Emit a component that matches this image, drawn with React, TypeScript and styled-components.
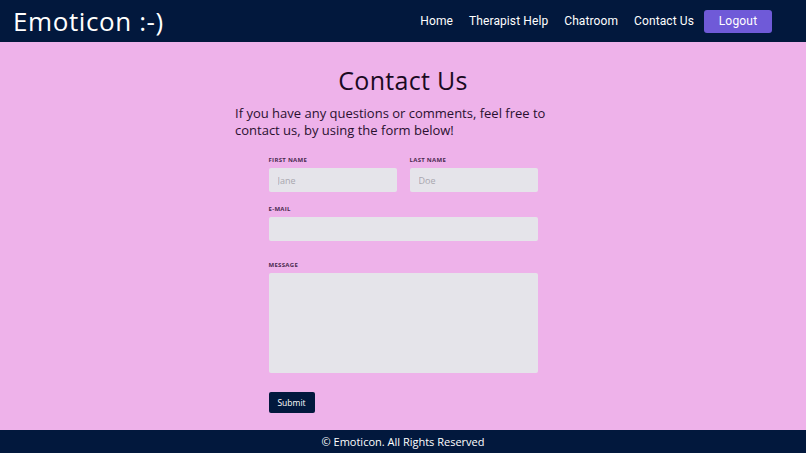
import React from "react";
import styled, { createGlobalStyle } from "styled-components";

const GlobalStyle = createGlobalStyle`
  body {
    margin: 0;
    font-family: "Open Sans", "Noto Sans", sans-serif;
    background: #eeb2ea;
  }
`;

const App: React.FC = () => {
  return (
    <>
      <GlobalStyle />
      <Page>
        <Header>
          <Logo>Emoticon :-)</Logo>
          <Nav>
            <NavLink>Home</NavLink>
            <NavLink>Therapist Help</NavLink>
            <NavLink>Chatroom</NavLink>
            <NavLink>Contact Us</NavLink>
            <LogoutButton>Logout</LogoutButton>
          </Nav>
        </Header>
        <Main>
          <Title>Contact Us</Title>
          <Intro>
            If you have any questions or comments, feel free to contact us, by
            using the form below!
          </Intro>
          <Form onSubmit={(e) => e.preventDefault()}>
            <Row>
              <Field>
                <Label>First Name</Label>
                <Input placeholder="Jane" />
              </Field>
              <Field>
                <Label>Last Name</Label>
                <Input placeholder="Doe" />
              </Field>
            </Row>
            <Field $top={13}>
              <Label>E-mail</Label>
              <Input />
            </Field>
            <Field $top={20}>
              <Label>Message</Label>
              <TextArea />
            </Field>
            <SubmitButton type="submit">Submit</SubmitButton>
          </Form>
        </Main>
        <Footer>© Emoticon. All Rights Reserved</Footer>
      </Page>
    </>
  );
};

export default App;

const Page = styled.div`
  min-height: 453px;
  display: flex;
  flex-direction: column;
`;

const Header = styled.header`
  height: 42px;
  flex-shrink: 0;
  background: #02183d;
  display: flex;
  align-items: center;
  justify-content: space-between;
  padding: 0 34px 0 13px;
  box-sizing: border-box;
`;

const Logo = styled.div`
  color: #fff;
  font-size: 26px;
  letter-spacing: 0.6px;
  line-height: 1;
`;

const Nav = styled.nav`
  display: flex;
  align-items: center;
  gap: 16px;
`;

const NavLink = styled.a`
  color: #fff;
  font-family: Roboto, "Noto Sans", sans-serif;
  font-size: 12px;
  letter-spacing: 0.1px;
  cursor: pointer;
`;

const LogoutButton = styled.button`
  margin-left: -6px;
  width: 68px;
  height: 23px;
  border: none;
  border-radius: 3px;
  background: #6f5ad8;
  color: #fff;
  font-family: Roboto, "Noto Sans", sans-serif;
  font-size: 12px;
  letter-spacing: 0.2px;
`;

const Main = styled.main`
  flex: 1;
  display: flex;
  flex-direction: column;
  align-items: center;
  padding: 19px 0 17px;
`;

const Title = styled.h1`
  margin: 0;
  font-size: 25px;
  font-weight: 400;
  color: #1a0a1f;
  line-height: 38px;
  letter-spacing: 0.3px;
`;

const Intro = styled.p`
  margin: 6px 18px 0 0;
  width: 318px;
  font-size: 13px;
  line-height: 17px;
  color: #2a1030;
`;

const Form = styled.form`
  width: 269px;
  margin-top: 17px;
  display: flex;
  flex-direction: column;
`;

const Row = styled.div`
  display: grid;
  grid-template-columns: minmax(0, 1fr) minmax(0, 1fr);
  gap: 13px;
`;

const Field = styled.div<{ $top?: number }>`
  display: flex;
  flex-direction: column;
  min-width: 0;
  margin-top: ${(p) => p.$top ?? 0}px;
`;

const Label = styled.label`
  font-size: 6px;
  line-height: 8px;
  font-weight: 700;
  text-transform: uppercase;
  color: #4a2a50;
  letter-spacing: 0.3px;
  margin-bottom: 4px;
`;

const Input = styled.input`
  width: 100%;
  height: 24px;
  box-sizing: border-box;
  border: none;
  border-radius: 2px;
  background: #e5e4ea;
  padding: 0 9px;
  font-family: inherit;
  font-size: 9px;
  outline: none;
  &::placeholder {
    color: #a8a6ae;
  }
`;

const TextArea = styled.textarea`
  width: 100%;
  height: 100px;
  box-sizing: border-box;
  border: none;
  border-radius: 2px;
  background: #e5e4ea;
  resize: none;
  outline: none;
`;

const SubmitButton = styled.button`
  align-self: flex-start;
  margin-top: 19px;
  width: 46px;
  height: 21px;
  border: none;
  border-radius: 2px;
  background: #02183d;
  color: #fff;
  font-family: inherit;
  font-size: 8.5px;
`;

const Footer = styled.footer`
  height: 23px;
  flex-shrink: 0;
  background: #02183d;
  color: #fff;
  font-size: 11px;
  display: flex;
  align-items: center;
  justify-content: center;
`;
